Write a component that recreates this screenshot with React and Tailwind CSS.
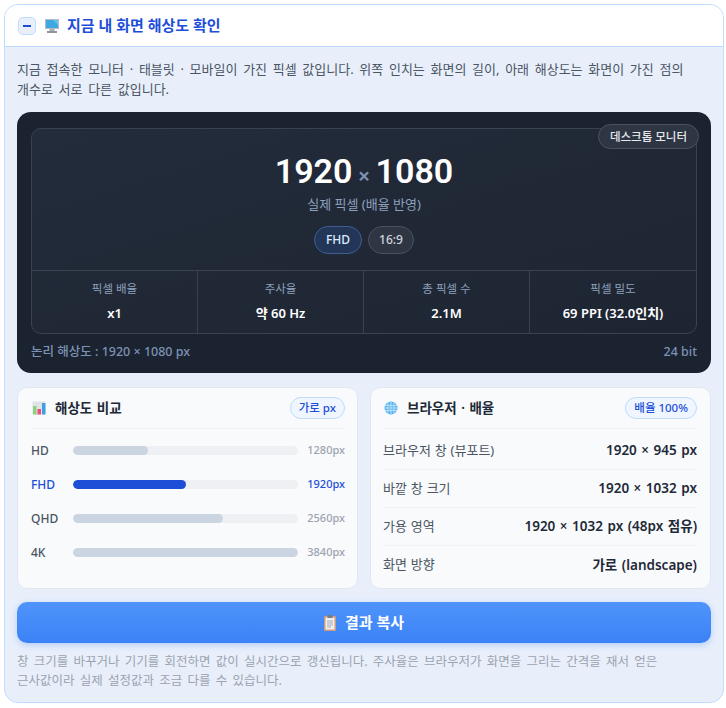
import React from 'react';

const FONT = "font-['Noto_Sans','Noto_Sans_CJK_KR',sans-serif]";

const stats = [
  { label: '픽셀 배율', value: 'x1' },
  { label: '주사율', value: '약 60 Hz' },
  { label: '총 픽셀 수', value: '2.1M' },
  { label: '픽셀 밀도', value: '69 PPI (32.0인치)' },
];

const bars = [
  { name: 'HD', width: '33.3%', px: '1280px' },
  { name: 'FHD', width: '50%', px: '1920px', active: true },
  { name: 'QHD', width: '66.7%', px: '2560px' },
  { name: '4K', width: '100%', px: '3840px' },
];

const rows = [
  { label: '브라우저 창 (뷰포트)', value: '1920 × 945 px' },
  { label: '바깥 창 크기', value: '1920 × 1032 px' },
  { label: '가용 영역', value: '1920 × 1032 px (48px 점유)' },
  { label: '화면 방향', value: '가로 (landscape)' },
];

function MonitorIcon() {
  return (
    <svg width="14" height="14" viewBox="0 0 14 14" className="shrink-0">
      <rect x="0" y="0" width="14" height="10" fill="#b4bcc4" />
      <rect x="1" y="1" width="12" height="8" fill="#5cc4f0" />
      <path d="M1 1h7l5 5v3H1z" fill="#3ea8e2" />
      <rect x="4.500" y="10" width="5" height="2" fill="#a8adb3" />
      <rect x="2" y="12" width="10" height="2" fill="#8f959c" />
    </svg>
  );
}

function ChartIcon() {
  return (
    <svg width="14" height="14" viewBox="0 0 14 14" className="shrink-0">
      <rect x="0.500" y="0.500" width="13" height="13" fill="#dfe3e8" />
      <rect x="1" y="5" width="3.500" height="8.500" fill="#8bd27c" />
      <rect x="5.500" y="8" width="3.500" height="5.500" fill="#f0487f" />
      <rect x="10" y="2" width="3.500" height="11.500" fill="#3f9fe0" />
    </svg>
  );
}

function GlobeIcon() {
  return (
    <svg width="14" height="14" viewBox="0 0 14 14" className="shrink-0">
      <circle cx="7" cy="7" r="6.500" fill="#58b4ee" />
      <g stroke="#bfe3fb" strokeWidth="0.900" fill="none">
        <path d="M1 4.500h12M0.500 7h13M1 9.500h12" />
        <path d="M4 1.500v11M7 0.500v13M10 1.500v11" />
      </g>
    </svg>
  );
}

function ClipboardIcon() {
  return (
    <svg width="12" height="16" viewBox="0 0 12 16" className="shrink-0">
      <rect x="0" y="1" width="12" height="15" rx="1" fill="#d09a7c" />
      <rect x="1.500" y="2.500" width="9" height="12" fill="#eef0f3" />
      <rect x="3.500" y="0" width="5" height="3" fill="#767e87" />
      <path d="M3 6h6M3 8h6M3 10h6M3 12h4" stroke="#a3abb5" strokeWidth="1" />
    </svg>
  );
}

function Chip({ children }) {
  return (
    <span className="rounded-full border border-[#bfdbfe] bg-[#eff6ff] px-2 h-[22px] flex items-center text-[11.500px] font-medium text-[#1d4ed8]">
      {children}
    </span>
  );
}

export default function App() {
  return (
    <div className={`${FONT} pt-1 pl-1 bg-white`}>
      <div className="w-[720px] h-[699px] rounded-[14px] border border-[#bfdbfe] bg-[#e8effb] overflow-hidden">
        <div className="h-[42px] bg-white border-b border-[#bfdbfe] flex items-center pl-[13px]">
          <span className="w-[18px] h-[18px] rounded-[5px] border border-[#bfdbfe] bg-[#e8effb] flex items-center justify-center">
            <span className="w-2 h-[2px] bg-[#1d4ed8]" />
          </span>
          <span className="ml-[9px]"><MonitorIcon /></span>
          <span className="ml-2 text-[15px] leading-none font-semibold text-[#1d4ed8]">지금 내 화면 해상도 확인</span>
        </div>

        <div className="px-3 pt-3">
          <p className="text-[13px] leading-[20px] text-[#4b5563] break-keep [word-spacing:2.300px]">
            지금 접속한 모니터 · 태블릿 · 모바일이 가진 픽셀 값입니다. 위쪽 인치는 화면의 길이, 아래 해상도는 화면이 가진 점의 개수로 서로 다른 값입니다.
          </p>

          <div className="mt-[13px] h-[261px] rounded-[14px] bg-[#1b2230] px-[14px] pt-4 flex flex-col">
            <div className="relative h-[206px] rounded-[10px] border border-[#3a4250] bg-gradient-to-br from-[#232c3b] to-[#1e2532] flex flex-col">
              <span className="absolute -top-[5px] -right-[3px] h-[25px] px-[11px] rounded-full border border-[#4a515f] bg-[#2e3543] flex items-center text-[11.500px] font-medium text-[#e5e7eb]">
                데스크톱 모니터
              </span>
              <div className="h-[141px] flex flex-col items-center">
                <div className="mt-[19px] flex items-baseline font-['Roboto',sans-serif] text-[34px] leading-[46px] font-semibold text-white">
                  <span>1920</span>
                  <span className="mx-[6px] text-[21px] leading-none font-medium text-[#7d93b5]">×</span>
                  <span>1080</span>
                </div>
                <div className="mt-[2px] text-[13px] leading-4 text-[#8da0bd]">실제 픽셀 (배율 반영)</div>
                <div className="mt-[14px] flex gap-[6px]">
                  <span className="h-[28px] px-[11px] rounded-full border border-[#3f5f94] bg-[#243657] flex items-center text-[12px] font-medium text-[#dbeafe]">FHD</span>
                  <span className="h-[28px] px-[10px] rounded-full border border-[#4a515f] bg-[#2e3543] flex items-center text-[12px] font-medium text-[#d1d5db]">16:9</span>
                </div>
              </div>
              <div className="flex-1 grid grid-cols-4 border-t border-[#3a4250]">
                {stats.map((s, i) => (
                  <div key={s.label} className={`flex flex-col items-center pt-[10px] ${i < 3 ? 'border-r border-[#3a4250]' : ''}`}>
                    <span className="text-[11.500px] leading-4 text-[#8da0bd]">{s.label}</span>
                    <span className="mt-[7px] text-[13px] leading-[18px] font-semibold text-white">{s.value}</span>
                  </div>
                ))}
              </div>
            </div>
            <div className="mt-[10px] flex justify-between text-[12.500px] leading-4 font-medium text-[#7d93b5]">
              <span>논리 해상도 : 1920 × 1080 px</span>
              <span>24 bit</span>
            </div>
          </div>

          <div className="mt-[14px] grid grid-cols-2 gap-3">
            <div className="h-[202px] rounded-[10px] border border-[#e2e8f0] bg-[#f8fafc] pl-[13px] pr-3">
              <div className="h-[41px] flex items-center border-b border-[#eef1f6]">
                <span className="ml-px"><ChartIcon /></span>
                <span className="ml-[9px] text-[13.500px] font-semibold text-[#1f2937] [word-spacing:1px]">해상도 비교</span>
                <span className="ml-auto"><Chip>가로 px</Chip></span>
              </div>
              <div className="pt-3 flex flex-col gap-[15px]">
                {bars.map((b) => (
                  <div key={b.name} className="h-[19px] flex items-center">
                    <span className={`w-[42px] text-[12px] font-medium ${b.active ? 'text-[#1d4ed8]' : 'text-[#4b5563]'}`}>{b.name}</span>
                    <div className="flex-1 h-[9px] rounded-full bg-[#eef0f4] overflow-hidden">
                      <div className={`h-full rounded-full ${b.active ? 'bg-[#1d4ed8]' : 'bg-[#cbd5e1]'}`} style={{ width: b.width }} />
                    </div>
                    <span className={`w-[47px] text-right text-[11px] font-medium ${b.active ? 'text-[#1d4ed8]' : 'text-[#9ca3af]'}`}>{b.px}</span>
                  </div>
                ))}
              </div>
            </div>

            <div className="h-[202px] rounded-[10px] border border-[#e2e8f0] bg-[#f8fafc] pl-3 pr-[13px]">
              <div className="h-[41px] flex items-center border-b border-[#eef1f6]">
                <span className="ml-px"><GlobeIcon /></span>
                <span className="ml-[9px] text-[13.500px] font-semibold text-[#1f2937] [word-spacing:1px]">브라우저 · 배율</span>
                <span className="ml-auto"><Chip>배율 100%</Chip></span>
              </div>
              <div className="pt-[3px]">
                {rows.map((r, i) => (
                  <div key={r.label} className={`h-[38px] flex items-center justify-between ${i < 3 ? 'border-b border-[#eef1f6]' : ''}`}>
                    <span className="text-[13px] text-[#4b5563] [word-spacing:0.500px]">{r.label}</span>
                    <span className="text-[13.500px] font-semibold text-[#1f2937] [word-spacing:1px]">{r.value}</span>
                  </div>
                ))}
              </div>
            </div>
          </div>

          <button className="mt-[13px] w-full h-[41px] rounded-[10px] bg-gradient-to-b from-[#4f94fb] to-[#3b82f6] shadow-[0_2px_6px_rgba(59,130,246,0.3)] flex items-center justify-center gap-[9px] text-[15px] font-semibold text-white">
            <ClipboardIcon />
            결과 복사
          </button>

          <p className="mt-[9px] text-[12.500px] leading-[19px] text-[#9ca3af] break-keep [word-spacing:2px]">
            창 크기를 바꾸거나 기기를 회전하면 값이 실시간으로 갱신됩니다. 주사율은 브라우저가 화면을 그리는 간격을 재서 얻은 근사값이라 실제 설정값과 조금 다를 수 있습니다.
          </p>
        </div>
      </div>
    </div>
  );
}
